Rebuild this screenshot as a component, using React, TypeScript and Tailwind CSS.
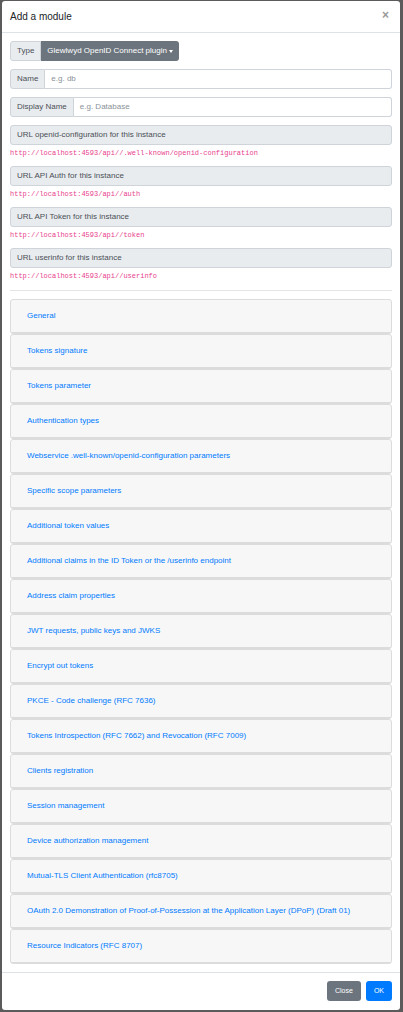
const urls = [
  { label: 'URL openid-configuration for this instance', value: 'http://localhost:4593/api//.well-known/openid-configuration' },
  { label: 'URL API Auth for this instance', value: 'http://localhost:4593/api//auth' },
  { label: 'URL API Token for this instance', value: 'http://localhost:4593/api//token' },
  { label: 'URL userinfo for this instance', value: 'http://localhost:4593/api//userinfo' },
];

const sections = [
  'General',
  'Tokens signature',
  'Tokens parameter',
  'Authentication types',
  'Webservice .well-known/openid-configuration parameters',
  'Specific scope parameters',
  'Additional token values',
  'Additional claims in the ID Token or the /userinfo endpoint',
  'Address claim properties',
  'JWT requests, public keys and JWKS',
  'Encrypt out tokens',
  'PKCE - Code challenge (RFC 7636)',
  'Tokens Introspection (RFC 7662) and Revocation (RFC 7009)',
  'Clients registration',
  'Session management',
  'Device authorization management',
  'Mutual-TLS Client Authentication (rfc8705)',
  'OAuth 2.0 Demonstration of Proof-of-Possession at the Application Layer (DPoP) (Draft 01)',
  'Resource Indicators (RFC 8707)',
];

function TextInput({ label, placeholder }: { label: string; placeholder: string }) {
  return (
    <div className="flex h-[20px] text-[8px]">
      <span className="flex items-center px-[6px] bg-[#e9ecef] border border-[#ced4da] rounded-l-[3px] text-[#495057] whitespace-nowrap">
        {label}
      </span>
      <div className="flex-1 flex items-center px-[6px] border border-l-0 border-[#ced4da] rounded-r-[3px] text-[#8a9299] bg-white">
        {placeholder}
      </div>
    </div>
  );
}

export default function App() {
  return (
    <div
      className="w-[403px] h-[1012px] bg-[#5b5b5b] pt-[1px] pl-[2px] overflow-hidden"
      style={{ fontFamily: '"Liberation Sans", Arial, sans-serif' }}
    >
      <div className="w-[398px] bg-white rounded-[3px]">
        {/* header */}
        <div className="flex items-center justify-between h-[32px] px-[8px] border-b border-[#dee2e6]">
          <h5 className="text-[10px] font-normal text-[#212529]">Add a module</h5>
          <span className="text-[12px] font-bold text-[#999] leading-none mr-[3px] -mt-[3px]">×</span>
        </div>

        {/* body */}
        <div className="p-[8px] flex flex-col">
          <div className="flex h-[20px] text-[8px]">
            <span className="flex items-center px-[6px] bg-[#e9ecef] border border-[#ced4da] rounded-l-[3px] text-[#495057]">
              Type
            </span>
            <button className="flex items-center gap-[2px] px-[6px] bg-[#6c757d] text-white rounded-r-[3px]">
              Glewlwyd OpenID Connect plugin
              <span className="border-t-[3px] border-t-white border-x-[2.5px] border-x-transparent" />
            </button>
          </div>
          <div className="mt-[8px]">
            <TextInput label="Name" placeholder="e.g. db" />
          </div>
          <div className="mt-[8px]">
            <TextInput label="Display Name" placeholder="e.g. Database" />
          </div>

          <div className="mt-[8px] flex flex-col gap-[8px]">
            {urls.map((u, i) => (
              <div key={i}>
                <div className="h-[20px] flex items-center px-[6px] bg-[#e9ecef] border border-[#ced4da] rounded-[3px] text-[8px] text-[#495057]">
                  {u.label}
                </div>
                <code
                  className="block mt-[3px] h-[10px] leading-[10px] text-[7px] text-[#e83e8c]"
                  style={{ fontFamily: '"Liberation Mono", "Courier New", monospace' }}
                >
                  {u.value}
                </code>
              </div>
            ))}
          </div>

          <hr className="mt-[9px] mb-[8px] border-t border-[#e5e5e5]" />

          <div className="flex flex-col">
            {sections.map((s, i) => (
              <div key={i} className="h-[35px] bg-[#f7f7f7] border border-[#dcdcdc] rounded-[3px] flex flex-col">
                <div className="flex-1 flex items-center pl-[16px] border-b border-[#dcdcdc] text-[8px] text-[#007bff] whitespace-nowrap overflow-hidden">
                  {s}
                </div>
              </div>
            ))}
          </div>
        </div>

        {/* footer */}
        <div className="flex justify-end gap-[5px] px-[8px] pt-[8px] pb-[9px] border-t border-[#dee2e6]">
          <button className="h-[20px] px-[8px] bg-[#6c757d] text-white text-[7px] rounded-[3px]">Close</button>
          <button className="h-[20px] px-[8px] bg-[#007bff] text-white text-[7px] rounded-[3px]">OK</button>
        </div>
      </div>
    </div>
  );
}
